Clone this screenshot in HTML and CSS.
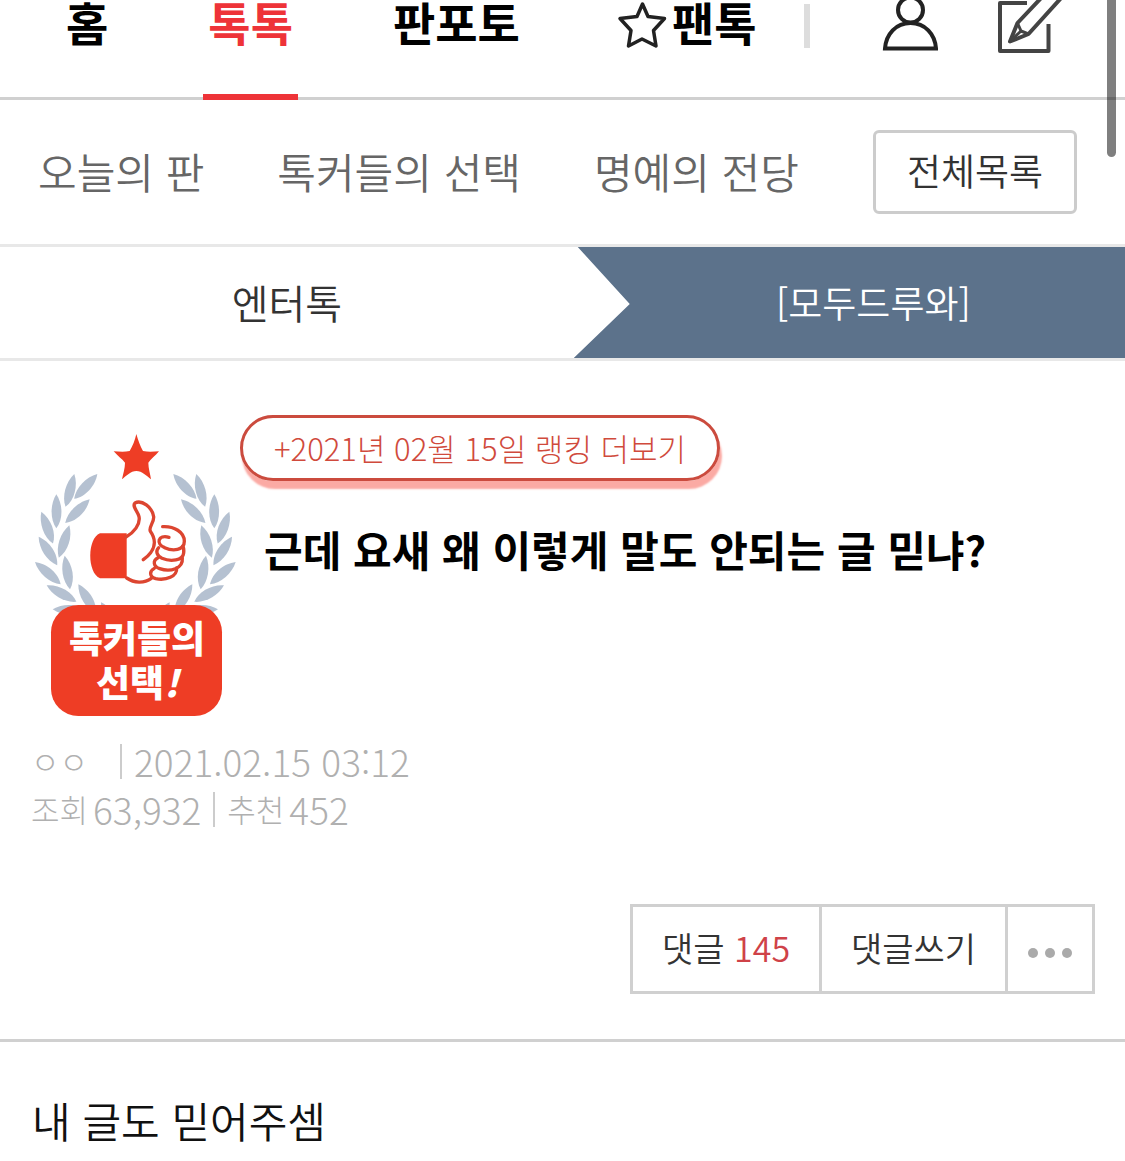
FILE: index.html
```html
<!DOCTYPE html>
<html lang="ko">
<head>
  <meta charset="UTF-8">
  <meta name="viewport" content="width=device-width, initial-scale=1.0">
  <title>근데 요새 왜 이렇게 말도 안되는 글 믿냐?</title>
  <link rel="stylesheet" href="styles.css">
</head>
<body>
  <header class="header">
    <nav class="gnb">
      <a href="#">홈</a>
      <a href="#" class="active">톡톡</a>
      <a href="#">판포토</a>
      <a href="#" class="fan">
        <svg width="52" height="50" viewBox="617 0 52 50" fill="none" stroke="#222" stroke-width="3.5" stroke-linejoin="round" aria-hidden="true">
          <path d="M643.500 4L649 16.500L665.500 18.500L654.500 30.500L657 46L643 39L629.500 46L632 30.500L621 18.500L638 16.500Z"/>
        </svg>팬톡
      </a>
    </nav>
    <span class="bar"></span>
    <a href="#" class="tool user" aria-label="내 정보">
      <svg width="56" height="54" viewBox="882 0 56 54" fill="none" stroke="#222" stroke-width="4" aria-hidden="true">
        <circle cx="910.500" cy="10" r="12.500"/>
        <path d="M885 48.500H936C935 34 925 23 910.500 23S886 34 885 48.500Z"/>
      </svg>
    </a>
    <a href="#" class="tool" aria-label="글쓰기">
      <svg width="68" height="54" viewBox="996 0 68 54" fill="none" stroke="#444" stroke-width="4" stroke-linejoin="round" aria-hidden="true">
        <path d="M1027 3H1000V51H1048.500V24"/>
        <path d="M1043 -4L1017.500 23L1010 41.500L1028.500 34L1062 -3"/>
        <path d="M1017.500 23L1021 31L1028.500 34M1010 41.500L1021 31" stroke-width="3"/>
      </svg>
    </a>
  </header>

  <nav class="lnb">
    <a href="#">오늘의 판</a>
    <a href="#">톡커들의 선택</a>
    <a href="#">명예의 전당</a>
    <button type="button" class="all">전체목록</button>
  </nav>

  <nav class="category">
    <a href="#" class="parent">엔터톡</a>
    <a href="#" class="current">[모두드루와]</a>
  </nav>

  <main>
    <section class="post-head">
      <svg class="badge" width="210" height="290" viewBox="30 90 630 870" role="img" aria-label="톡커들의 선택!">
        <defs>
          <path id="leaf" d="M0 0C30 -20 75 -21 102 0C75 19 30 19 0 0Z"/>
          <g id="laurel" fill="#b5c1d1">
            <use href="#leaf" transform="translate(163 222) rotate(105)"/>
            <use href="#leaf" transform="translate(232 222) rotate(133)"/>
            <use href="#leaf" transform="translate(109 283) rotate(90)"/>
            <use href="#leaf" transform="translate(209 298) rotate(136)"/>
            <use href="#leaf" transform="translate(64 335) rotate(70)"/>
            <use href="#leaf" transform="translate(148 376) rotate(108)"/>
            <use href="#leaf" transform="translate(56 410) rotate(57)"/>
            <use href="#leaf" transform="translate(134 467) rotate(81)"/>
            <use href="#leaf" transform="translate(45 486) rotate(41)"/>
            <use href="#leaf" transform="translate(80 556) rotate(29)"/>
            <use href="#leaf" transform="translate(175 553) rotate(59)"/>
            <use href="#leaf" transform="translate(98 628) rotate(3)"/>
            <use href="#leaf" transform="translate(243 607) rotate(60)"/>
          </g>
        </defs>
        <use href="#laurel"/>
        <use href="#laurel" transform="translate(692 0) scale(-1 1)"/>
        <path fill="#ee3d25" d="M349 102C354 120 361 140 369 153C385 157 402 155 417 154C406 167 392 178 385 188C385 205 391 222 393 238C380 228 366 213 349 213S319 228 306 238C309 222 315 205 315 188C306 177 292 167 281 154C297 155 313 157 329 153C338 138 345 120 349 102Z"/>
        <path fill="#ee3d25" d="M240 400H320V535H240C201 520 201 415 240 400Z"/>
        <g fill="none" stroke="#dc4530" stroke-width="10" stroke-linecap="round" stroke-linejoin="round">
          <path d="M318 411C341 398 362 373 357 350C354 335 335 318 345 309C365 298 397 322 401 350C403 366 385 382 391 394C411 422 407 452 370 479"/>
          <path d="M320 534C342 549 372 551 394 535"/>
          <path d="M428 380C462 378 493 396 493 424C493 452 458 454 434 443C407 432 413 403 447 412"/>
          <path d="M416 443C406 453 410 467 426 475C452 486 489 482 491 459C492 450 491 442 488 438"/>
          <path d="M414 473C397 482 400 499 419 506C451 517 490 506 487 474"/>
          <path d="M403 505C387 514 388 530 407 536C438 542 472 530 470 504"/>
        </g>
        <rect x="93" y="615" width="513" height="333" rx="82" fill="#ee3d25"/>
        <text class="badge-text" x="351" y="760" text-anchor="middle">톡커들의</text>
        <text class="badge-text" x="352" y="892" text-anchor="middle">선택<tspan font-style="italic">!</tspan></text>
      </svg>
      <div class="post-title">
        <a href="#" class="ranking">+2021년 02월 15일 랭킹 더보기</a>
        <h1>근데 요새 왜 이렇게 말도 안되는 글 믿냐?</h1>
      </div>
    </section>

    <div class="meta">
      <div class="row">
        <span class="writer">ㅇㅇ</span>
        <span class="date">2021.02.15 03:12</span>
      </div>
      <div class="row">
        <span class="count">조회<b>63,932</b></span>
        <span class="count">추천<b>452</b></span>
      </div>
    </div>

    <div class="actions">
      <button type="button" class="reply">댓글 <em>145</em></button>
      <button type="button" class="write">댓글쓰기</button>
      <button type="button" class="more" aria-label="더보기"><i></i><i></i><i></i></button>
    </div>

    <article class="content">
      <p>내 글도 믿어주셈</p>
    </article>
  </main>

  <div class="scroll-thumb"></div>
</body>
</html>
```
FILE: styles.css
```css
* {
  box-sizing: border-box;
}
body {
  margin: 0;
  background: #fff;
  color: #111;
  font-family: "Noto Sans CJK KR", sans-serif;
  font-weight: 350;
}
a {
  color: inherit;
  text-decoration: none;
}
button {
  margin: 0;
  padding: 0;
  border: 0;
  background: none;
  color: #333;
  font: inherit;
  cursor: pointer;
}
svg {
  display: block;
}

.header {
  display: flex;
  align-items: flex-start;
  padding-left: 66px;
  border-bottom: 3px solid #d0d0d0;
}
.gnb {
  display: flex;
  gap: 90px;
  margin-bottom: -3px;
}
.gnb a {
  height: 100px;
  padding: 0 5px;
  border-bottom: 6px solid transparent;
  color: #000;
  font-size: 46px;
  font-weight: 700;
  line-height: 42px;
  white-space: nowrap;
}
.gnb a:first-child {
  padding-left: 0;
}
.gnb a.active {
  color: #ee3338;
  border-color: #ee3338;
}
.gnb .fan {
  display: flex;
  gap: 4px;
  padding-left: 1px;
}
.bar {
  width: 6px;
  height: 44px;
  margin: 4px 0 0 42px;
  background: #ddd;
}
.tool {
  margin-left: 58px;
}
.user {
  margin-left: 72px;
}

.lnb {
  display: flex;
  align-items: center;
  gap: 73px;
  padding: 30px 48px 30px 38px;
  border-bottom: 3px solid #e8e8e8;
  color: #666;
  font-size: 42px;
  white-space: nowrap;
}
.lnb a {
  padding-bottom: 4px;
}
.all {
  flex: none;
  width: 204px;
  height: 84px;
  margin-left: auto;
  padding-bottom: 4px;
  border: 3px solid #ccc;
  border-radius: 6px;
  font-size: 37px;
}

.category {
  display: flex;
  border-bottom: 3px solid #e8e8e8;
  line-height: 111px;
  text-align: center;
}
.parent {
  width: 51%;
  color: #333;
  font-size: 40px;
}
.current {
  width: 49%;
  padding-left: 48px;
  background: #5c728b;
  color: #fff;
  font-size: 37px;
  clip-path: polygon(4px 0, 100% 0, 100% 100%, 0 100%, 56px 57px);
}

.post-head {
  display: flex;
  align-items: flex-end;
  padding: 54px 30px 0 30px;
}
.badge {
  flex: none;
}
.badge-text {
  fill: #fff;
  font-size: 111px;
  font-weight: 900;
}
.post-title {
  align-self: flex-start;
  min-height: 305px;
}
.ranking {
  display: inline-block;
  padding: 0 31px;
  border: 3px solid #cb4b3e;
  border-radius: 33px;
  box-shadow: 2px 8px 2px #fbaaa4;
  color: #d04a3c;
  font-size: 31px;
  font-weight: 300;
  line-height: 60px;
}
.post-title h1 {
  margin: 40px 0 0 24px;
  color: #000;
  font-size: 42px;
  font-weight: 700;
  line-height: 56px;
}

.meta {
  padding: 17px 31px 0;
  color: #b0b0b0;
  font-size: 31px;
  font-weight: 300;
}
.row {
  display: flex;
  align-items: center;
  height: 48px;
  line-height: 40px;
}
.row span {
  display: flex;
  align-items: center;
}
.row span + span::before {
  content: "";
  width: 2px;
  height: 35px;
  margin: 0 12px;
  background: #ccc;
}
.writer {
  margin-right: 20px;
}
.date, .count b {
  font-size: 37px;
  font-weight: 300;
}
.count b {
  margin-left: 5px;
}

.actions {
  display: flex;
  width: fit-content;
  height: 90px;
  margin: 71px 30px 45px auto;
  border: 3px solid #d0d0d0;
  font-size: 34px;
}
.actions button {
  padding-bottom: 4px;
}
.actions button + button {
  border-left: 3px solid #d0d0d0;
}
.actions em {
  color: #cf4248;
  font-style: normal;
}
.reply, .write {
  width: 186px;
}
.actions .more {
  display: flex;
  align-items: center;
  justify-content: center;
  gap: 7px;
  width: 87px;
  padding: 8px 0 0;
}
.more i {
  width: 10px;
  height: 10px;
  border-radius: 50%;
  background: #aaa;
}

.content {
  padding: 48px 32px 11px;
  border-top: 3px solid #d0d0d0;
  font-size: 42px;
  line-height: 60px;
}
.content p {
  margin: 0;
}

.scroll-thumb {
  position: absolute;
  top: -10px;
  right: 9px;
  width: 9px;
  height: 167px;
  border-radius: 5px;
  background: rgba(0, 0, 0, 0.5);
}
```
